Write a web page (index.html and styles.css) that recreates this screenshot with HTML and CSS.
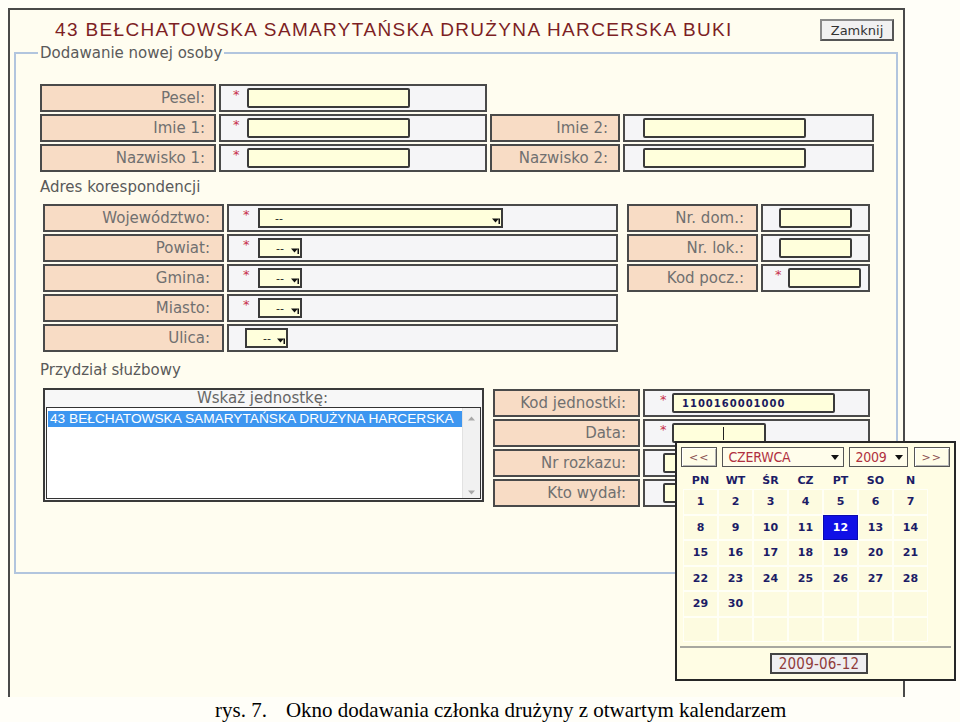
FILE: index.html
```html
<!DOCTYPE html>
<html lang="pl">
<head>
<meta charset="utf-8">
<title>Dodawanie nowej osoby</title>
<link rel="stylesheet" href="styles.css">
</head>
<body>
<div class="window">
  <div class="header">
    <div class="title">43 BEŁCHATOWSKA SAMARYTAŃSKA DRUŻYNA HARCERSKA BUKI</div>
    <div class="btn-close">Zamknij</div>
  </div>
  <fieldset class="group">
    <legend>Dodawanie nowej osoby</legend>
    <div class="rows sec1">
      <div class="row">
        <div class="lbl l1">Pesel:</div>
        <div class="val v1"><span class="req">*</span><span class="inp i-long"></span></div>
      </div>
      <div class="row">
        <div class="lbl l1">Imie 1:</div>
        <div class="val v1"><span class="req">*</span><span class="inp i-long"></span></div>
        <div class="lbl l2">Imie 2:</div>
        <div class="val v2"><span class="inp i-long"></span></div>
      </div>
      <div class="row">
        <div class="lbl l1">Nazwisko 1:</div>
        <div class="val v1"><span class="req">*</span><span class="inp i-long"></span></div>
        <div class="lbl l2">Nazwisko 2:</div>
        <div class="val v2"><span class="inp i-long"></span></div>
      </div>
    </div>

    <div class="subhead">Adres korespondencji</div>

    <div class="sec2">
      <div class="rows">
        <div class="row">
          <div class="lbl a1">Województwo:</div>
          <div class="val a2"><span class="req r2">*</span><span class="sel s-wide"><span>--</span><svg class="arr" width="8" height="7" viewBox="0 0 8 7"><path d="M0 1.5h7L3.5 5.5z M6.5 1.5h1.5v5.5H6.5z" fill="#111"/></svg></span></div>
        </div>
        <div class="row">
          <div class="lbl a1">Powiat:</div>
          <div class="val a2"><span class="req r2">*</span><span class="sel s-small"><span>--</span><svg class="arr" width="8" height="7" viewBox="0 0 8 7"><path d="M0 1.5h7L3.5 5.5z M6.5 1.5h1.5v5.5H6.5z" fill="#111"/></svg></span></div>
        </div>
        <div class="row">
          <div class="lbl a1">Gmina:</div>
          <div class="val a2"><span class="req r2">*</span><span class="sel s-small"><span>--</span><svg class="arr" width="8" height="7" viewBox="0 0 8 7"><path d="M0 1.5h7L3.5 5.5z M6.5 1.5h1.5v5.5H6.5z" fill="#111"/></svg></span></div>
        </div>
        <div class="row">
          <div class="lbl a1">Miasto:</div>
          <div class="val a2"><span class="req r2">*</span><span class="sel s-small"><span>--</span><svg class="arr" width="8" height="7" viewBox="0 0 8 7"><path d="M0 1.5h7L3.5 5.5z M6.5 1.5h1.5v5.5H6.5z" fill="#111"/></svg></span></div>
        </div>
        <div class="row">
          <div class="lbl a1">Ulica:</div>
          <div class="val a2 a2-plain"><span class="sel s-small s-ulica"><span>--</span><svg class="arr" width="8" height="7" viewBox="0 0 8 7"><path d="M0 1.5h7L3.5 5.5z M6.5 1.5h1.5v5.5H6.5z" fill="#111"/></svg></span></div>
        </div>
      </div>
      <div class="rows">
        <div class="row">
          <div class="lbl b1">Nr. dom.:</div>
          <div class="val b2"><span class="inp i-short"></span></div>
        </div>
        <div class="row">
          <div class="lbl b1">Nr. lok.:</div>
          <div class="val b2"><span class="inp i-short"></span></div>
        </div>
        <div class="row">
          <div class="lbl b1">Kod pocz.:</div>
          <div class="val b2 b2-req"><span class="req r3">*</span><span class="inp i-short"></span></div>
        </div>
      </div>
    </div>

    <div class="subhead sh2">Przydział służbowy</div>

    <div class="sec3">
      <div class="unitbox">
        <div class="unit-head">Wskaż jednostkę:</div>
        <div class="unit-list">
          <div class="items">
            <div class="item active">43 BEŁCHATOWSKA SAMARYTAŃSKA DRUŻYNA HARCERSKA</div>
          </div>
          <div class="scroll">
            <svg width="7" height="5" viewBox="0 0 7 5"><path d="M0 4.5L3.5 0.5 7 4.5z" fill="#a8a8a8"/></svg>
            <svg width="7" height="5" viewBox="0 0 7 5"><path d="M0 0.5h7L3.5 4.5z" fill="#a8a8a8"/></svg>
          </div>
        </div>
      </div>
      <div class="rows rows3">
        <div class="row">
          <div class="lbl c1">Kod jednostki:</div>
          <div class="val c2"><span class="req r4">*</span><span class="inp i-code">1100160001000</span></div>
        </div>
        <div class="row">
          <div class="lbl c1">Data:</div>
          <div class="val c2"><span class="req r4">*</span><span class="inp i-date"><span class="caret"></span></span></div>
        </div>
        <div class="row">
          <div class="lbl c1">Nr rozkazu:</div>
          <div class="val c2 c2-plain"><span class="inp i-long"></span></div>
        </div>
        <div class="row">
          <div class="lbl c1">Kto wydał:</div>
          <div class="val c2 c2-plain"><span class="inp i-long"></span></div>
        </div>
      </div>
    </div>
  </fieldset>
</div>

<p class="caption"><span>rys. 7.</span><span class="cap-text">Okno dodawania członka drużyny z otwartym kalendarzem</span></p>

<div class="cal">
  <div class="cal-head">
    <div class="cbtn nav">&lt;&lt;</div>
    <div class="csel month"><span>CZERWCA</span><svg width="8" height="5" viewBox="0 0 8 5"><path d="M0 0h8L4 5z" fill="#111"/></svg></div>
    <div class="csel year"><span>2009</span><svg width="8" height="5" viewBox="0 0 8 5"><path d="M0 0h8L4 5z" fill="#111"/></svg></div>
    <div class="cbtn nav">&gt;&gt;</div>
  </div>
  <div class="cal-dow">
    <span>PN</span><span>WT</span><span>ŚR</span><span>CZ</span><span>PT</span><span>SO</span><span>N</span>
  </div>
  <div class="cal-days">
    <span>1</span><span>2</span><span>3</span><span>4</span><span>5</span><span>6</span><span>7</span>
    <span>8</span><span>9</span><span>10</span><span>11</span><span class="today">12</span><span>13</span><span>14</span>
    <span>15</span><span>16</span><span>17</span><span>18</span><span>19</span><span>20</span><span>21</span>
    <span>22</span><span>23</span><span>24</span><span>25</span><span>26</span><span>27</span><span>28</span>
    <span>29</span><span>30</span><span></span><span></span><span></span><span></span><span></span>
    <span></span><span></span><span></span><span></span><span></span><span></span><span></span>
  </div>
  <div class="cal-sep"></div>
  <div class="cal-foot"><div class="cbtn datebtn">2009-06-12</div></div>
</div>
</body>
</html>
```

FILE: styles.css
```css
* { box-sizing: border-box; }

html, body {
  margin: 0;
  padding: 0;
}

body {
  position: relative;
  width: 960px;
  height: 722px;
  overflow: hidden;
  background: #fffef8;
  font-family: "DejaVu Sans", Verdana, sans-serif;
}

/* ---------- window ---------- */
.window {
  margin: 8px 0 0 8px;
  width: 897px;
  height: 689px;
  border: 2px solid #4a4a4a;
  border-bottom: none;
  background: #fffdf0;
}

.header {
  display: flex;
  align-items: center;
  justify-content: space-between;
  height: 22px;
  margin-top: 9px;
  padding: 0 9px 0 45px;
}

.title {
  font-family: "Liberation Sans", Arial, sans-serif;
  font-size: 19px;
  letter-spacing: 1.35px;
  color: #7d1f24;
  white-space: nowrap;
}

.btn-close {
  width: 74px;
  height: 22px;
  display: flex;
  align-items: center;
  justify-content: center;
  border: 2px solid #555;
  border-top-color: #8a8a8a;
  border-left-color: #8a8a8a;
  background: #f1f1f1;
  font-size: 13px;
  color: #333;
}

/* ---------- fieldset ---------- */
.group {
  margin: 3px 5px 0 4px;
  padding: 22px 0 65px 24px;
  border: 2px solid #b2c5de;
  min-width: 0;
}

.group legend {
  margin-left: -2px;
  padding: 0 2px;
  font-size: 15px;
  line-height: 18px;
  color: #5a5a5a;
}

.rows {
  display: flex;
  flex-direction: column;
  gap: 2px;
}

.row {
  display: flex;
  gap: 3px;
  height: 28px;
}

.lbl {
  display: flex;
  align-items: center;
  justify-content: flex-end;
  padding-right: 10px;
  border: 2px solid #4a4a4a;
  background: #f8dcc5;
  font-size: 15px;
  color: #707070;
  white-space: nowrap;
}

.val {
  display: flex;
  align-items: center;
  border: 2px solid #4a4a4a;
  background: #f5f5f7;
}

.req {
  align-self: flex-start;
  margin-top: 2px;
  font-size: 13px;
  line-height: 14px;
  color: #c8304c;
}

.inp {
  display: flex;
  align-items: center;
  height: 20px;
  border: 2px solid #3a3a3a;
  border-radius: 2px;
  background: #ffffdc;
}

.sel {
  display: flex;
  align-items: center;
  justify-content: space-between;
  height: 20px;
  border: 2px solid #3a3a3a;
  background: #ffffdc;
  font-size: 11px;
  color: #222;
  padding: 0 1px 0 15px;
}

.sel .arr { margin-top: 5px; }

/* section 1 */
.l1 { width: 176px; padding-right: 9px; }
.v1 { width: 268px; padding-left: 12px; }
.v1 .req { width: 14px; }
.l2 { width: 130px; }
.v2 { width: 251px; padding-left: 18px; }
.i-long { width: 163px; }

.subhead {
  margin: 6px 0 8px;
  height: 18px;
  line-height: 18px;
  font-size: 15px;
  color: #5a5a5a;
}

.sh2 { margin: 9px 0 9px; }

/* section 2 */
.sec2 {
  display: flex;
  gap: 9px;
  margin-left: 3px;
  align-items: flex-start;
}

.a1 { width: 181px; padding-right: 12px; }
.a2 { width: 391px; padding-left: 14px; }
.a2 .r2 { width: 15px; }
.a2-plain { padding-left: 16px; }
.s-wide { width: 245px; }
.s-small { width: 44px; padding-left: 16px; }
.s-ulica { width: 43px; }

.b1 { width: 131px; padding-right: 12px; }
.b2 { width: 109px; padding-left: 16px; }
.b2-req { padding-left: 12px; }
.b2 .r3 { width: 13px; }
.i-short { width: 73px; }

/* section 3 */
.sec3 {
  display: flex;
  gap: 9px;
  margin-left: 3px;
  align-items: flex-start;
}

.rows3 { margin-top: 1px; }

.unitbox {
  width: 441px;
  height: 114px;
  display: flex;
  flex-direction: column;
  border: 2px solid #3a3a3a;
  background: #f7f7f7;
  padding: 0 1px 1px 1px;
}

.unit-head {
  height: 17px;
  line-height: 17px;
  text-align: center;
  font-size: 15px;
  color: #666;
  padding-right: 2px;
}

.unit-list {
  flex: 1;
  display: flex;
  border: 1px solid #333;
  background: #fff;
}

.items {
  flex: 1;
  padding: 3px 0 0 1px;
}

.item {
  height: 16px;
  line-height: 16px;
  padding-left: 2px;
  font-family: "Liberation Sans", Arial, sans-serif;
  font-size: 13.7px;
  white-space: nowrap;
}

.item.active {
  background: #3d96f0;
  color: #fff;
}

.scroll {
  width: 18px;
  display: flex;
  flex-direction: column;
  justify-content: space-between;
  align-items: center;
  padding: 8px 0 3px;
  background: #f1f1f1;
  border-left: 1px solid #e2e2e2;
}

.c1 { width: 147px; padding-right: 12px; }
.c2 { width: 227px; padding-left: 15px; }
.c2 .r4 { width: 12px; }
.c2-plain { padding-left: 18px; }

.i-code {
  width: 163px;
  padding-left: 8px;
  font-size: 10px;
  font-weight: bold;
  letter-spacing: 1px;
  color: #1a1a5e;
}

.i-date {
  width: 94px;
  padding-left: 49px;
}

.caret {
  width: 1px;
  height: 13px;
  background: #222;
}

/* ---------- caption ---------- */
.caption {
  margin: 2px 0 0;
  padding-left: 215px;
  font-family: "Liberation Serif", "Times New Roman", serif;
  font-size: 21px;
  line-height: 23px;
  color: #000;
  white-space: nowrap;
}

.cap-text { margin-left: 19px; }

/* ---------- calendar popup ---------- */
.cal {
  position: absolute;
  left: 675px;
  top: 441px;
  width: 281px;
  height: 240px;
  border: 2px solid #262626;
  background: #fffde4;
  padding: 4px 4px 0;
}

.cal-head {
  display: flex;
  height: 20px;
  gap: 5px;
}

.cbtn {
  display: flex;
  align-items: center;
  justify-content: center;
  border: 1px solid #555;
  box-shadow: inset 1px 1px 0 #fff, inset -1px -1px 0 #b8b8b8;
  background: #fffde8;
}

.nav {
  width: 37px;
  font-size: 11px;
  color: #8a5050;
  letter-spacing: 1px;
}

.nav:last-child { margin-left: 1px; }

.csel {
  display: flex;
  align-items: center;
  justify-content: space-between;
  padding: 0 4px 0 5px;
  border: 1px solid #555;
  background: #fffdeb;
  font-family: "DejaVu Sans Condensed", "Liberation Sans Narrow", "Arial Narrow", sans-serif;
  font-stretch: condensed;
  font-size: 14px;
  letter-spacing: -0.2px;
  color: #b0303e;
}

.month { width: 124px; }
.year { width: 59px; }

.cal-dow,
.cal-days {
  display: grid;
  grid-template-columns: repeat(7, 35px);
  margin-left: 2px;
}

.cal-dow {
  margin-top: 5px;
  height: 17px;
}

.cal-dow span,
.cal-days span {
  display: flex;
  align-items: center;
  justify-content: center;
  font-size: 11px;
  font-weight: bold;
  color: #1c1c66;
}

.cal-days {
  grid-auto-rows: 25.5px;
}

.cal-days span {
  border: 1px solid #fffff6;
  background: #fdfbe0;
}

.cal-days span.today {
  background: #1010e6;
  border-color: #0a0ab0;
  color: #fff;
}

.cal-sep {
  margin: 4px -1px 0;
  height: 2px;
  background: #a8a8a0;
}

.cal-foot {
  display: flex;
  justify-content: center;
  padding-left: 7px;
  margin-top: 5px;
}

.datebtn {
  width: 98px;
  height: 21px;
  border: 2px solid #444;
  box-shadow: none;
  background: #efeff1;
  font-family: "DejaVu Sans Condensed", "Liberation Sans Narrow", "Arial Narrow", sans-serif;
  font-stretch: condensed;
  font-size: 15px;
  letter-spacing: 0.2px;
  color: #903c3c;
}
```
